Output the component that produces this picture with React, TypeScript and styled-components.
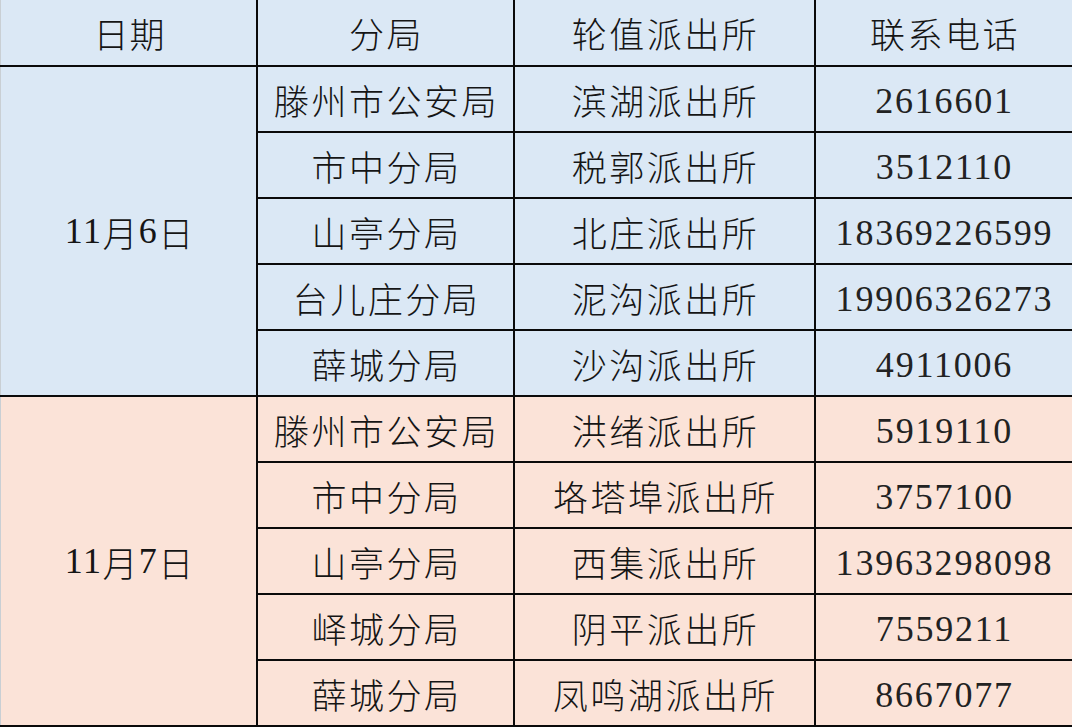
import React from "react";
import styled, { createGlobalStyle } from "styled-components";

const Global = createGlobalStyle`
  html, body { margin: 0; padding: 0; background: #fff; }
  body { width: 1072px; height: 728px; overflow: hidden; }
`;

type Tone = "blue" | "pink";

const bg: Record<Tone, string> = {
  blue: "#dbe8f5",
  pink: "#fbe3d8",
};

const Table = styled.div`
  display: grid;
  grid-template-columns: 256px 255px 299px 256px;
  grid-template-rows: 65px repeat(10, 64px);
  gap: 2px;
  width: 1072px;
  background: #0a0a0a;
  border-bottom: 2px solid #0a0a0a;
  box-sizing: border-box;
  font-family: "Noto Sans CJK SC", "Noto Sans", sans-serif;
  color: #151515;
`;

const Cell = styled.div<{ $tone: Tone; $span?: number; $num?: boolean }>`
  background: ${(p) => bg[p.$tone]};
  grid-row: ${(p) => (p.$span ? `span ${p.$span}` : "auto")};
  display: flex;
  align-items: center;
  justify-content: center;
  padding-left: ${(p) => (p.$num ? "1px" : "2px")};
  padding-top: ${(p) => (p.$num ? "3px" : "0")};
  font-size: ${(p) => (p.$num ? "36px" : "35px")};
  font-weight: ${(p) => (p.$num ? 400 : 300)};
  letter-spacing: ${(p) => (p.$num ? "1.8px" : "2.5px")};
  font-family: ${(p) =>
    p.$num
      ? `"Liberation Serif", "Noto Sans CJK SC", serif`
      : `"Noto Sans CJK SC", sans-serif`};
  color: ${(p) => (p.$num ? "#222" : "#151515")};
  white-space: nowrap;
  line-height: 1;
`;

const DateCell = styled(Cell)`
  border-left: 1px solid #c9cfd4;
  letter-spacing: 1px;
`;

const Num = styled.span`
  font-family: "Liberation Serif", serif;
  font-size: 36px;
  font-weight: 400;
  letter-spacing: 1.6px;
`;

interface Row {
  bureau: string;
  station: string;
  phone: string;
}

const days: { date: [string, string]; tone: Tone; rows: Row[] }[] = [
  {
    date: ["11", "6"],
    tone: "blue",
    rows: [
      { bureau: "滕州市公安局", station: "滨湖派出所", phone: "2616601" },
      { bureau: "市中分局", station: "税郭派出所", phone: "3512110" },
      { bureau: "山亭分局", station: "北庄派出所", phone: "18369226599" },
      { bureau: "台儿庄分局", station: "泥沟派出所", phone: "19906326273" },
      { bureau: "薛城分局", station: "沙沟派出所", phone: "4911006" },
    ],
  },
  {
    date: ["11", "7"],
    tone: "pink",
    rows: [
      { bureau: "滕州市公安局", station: "洪绪派出所", phone: "5919110" },
      { bureau: "市中分局", station: "垎塔埠派出所", phone: "3757100" },
      { bureau: "山亭分局", station: "西集派出所", phone: "13963298098" },
      { bureau: "峄城分局", station: "阴平派出所", phone: "7559211" },
      { bureau: "薛城分局", station: "凤鸣湖派出所", phone: "8667077" },
    ],
  },
];

export default function App() {
  return (
    <>
      <Global />
      <Table>
        <DateCell $tone="blue">日期</DateCell>
        <Cell $tone="blue">分局</Cell>
        <Cell $tone="blue">轮值派出所</Cell>
        <Cell $tone="blue">联系电话</Cell>
        {days.map((d) => (
          <React.Fragment key={d.date.join("-")}>
            <DateCell $tone={d.tone} $span={5}>
              <Num>{d.date[0]}</Num>月<Num>{d.date[1]}</Num>日
            </DateCell>
            {d.rows.map((r, i) => (
              <React.Fragment key={i}>
                <Cell $tone={d.tone}>{r.bureau}</Cell>
                <Cell $tone={d.tone}>{r.station}</Cell>
                <Cell $tone={d.tone} $num>
                  {r.phone}
                </Cell>
              </React.Fragment>
            ))}
          </React.Fragment>
        ))}
      </Table>
    </>
  );
}
